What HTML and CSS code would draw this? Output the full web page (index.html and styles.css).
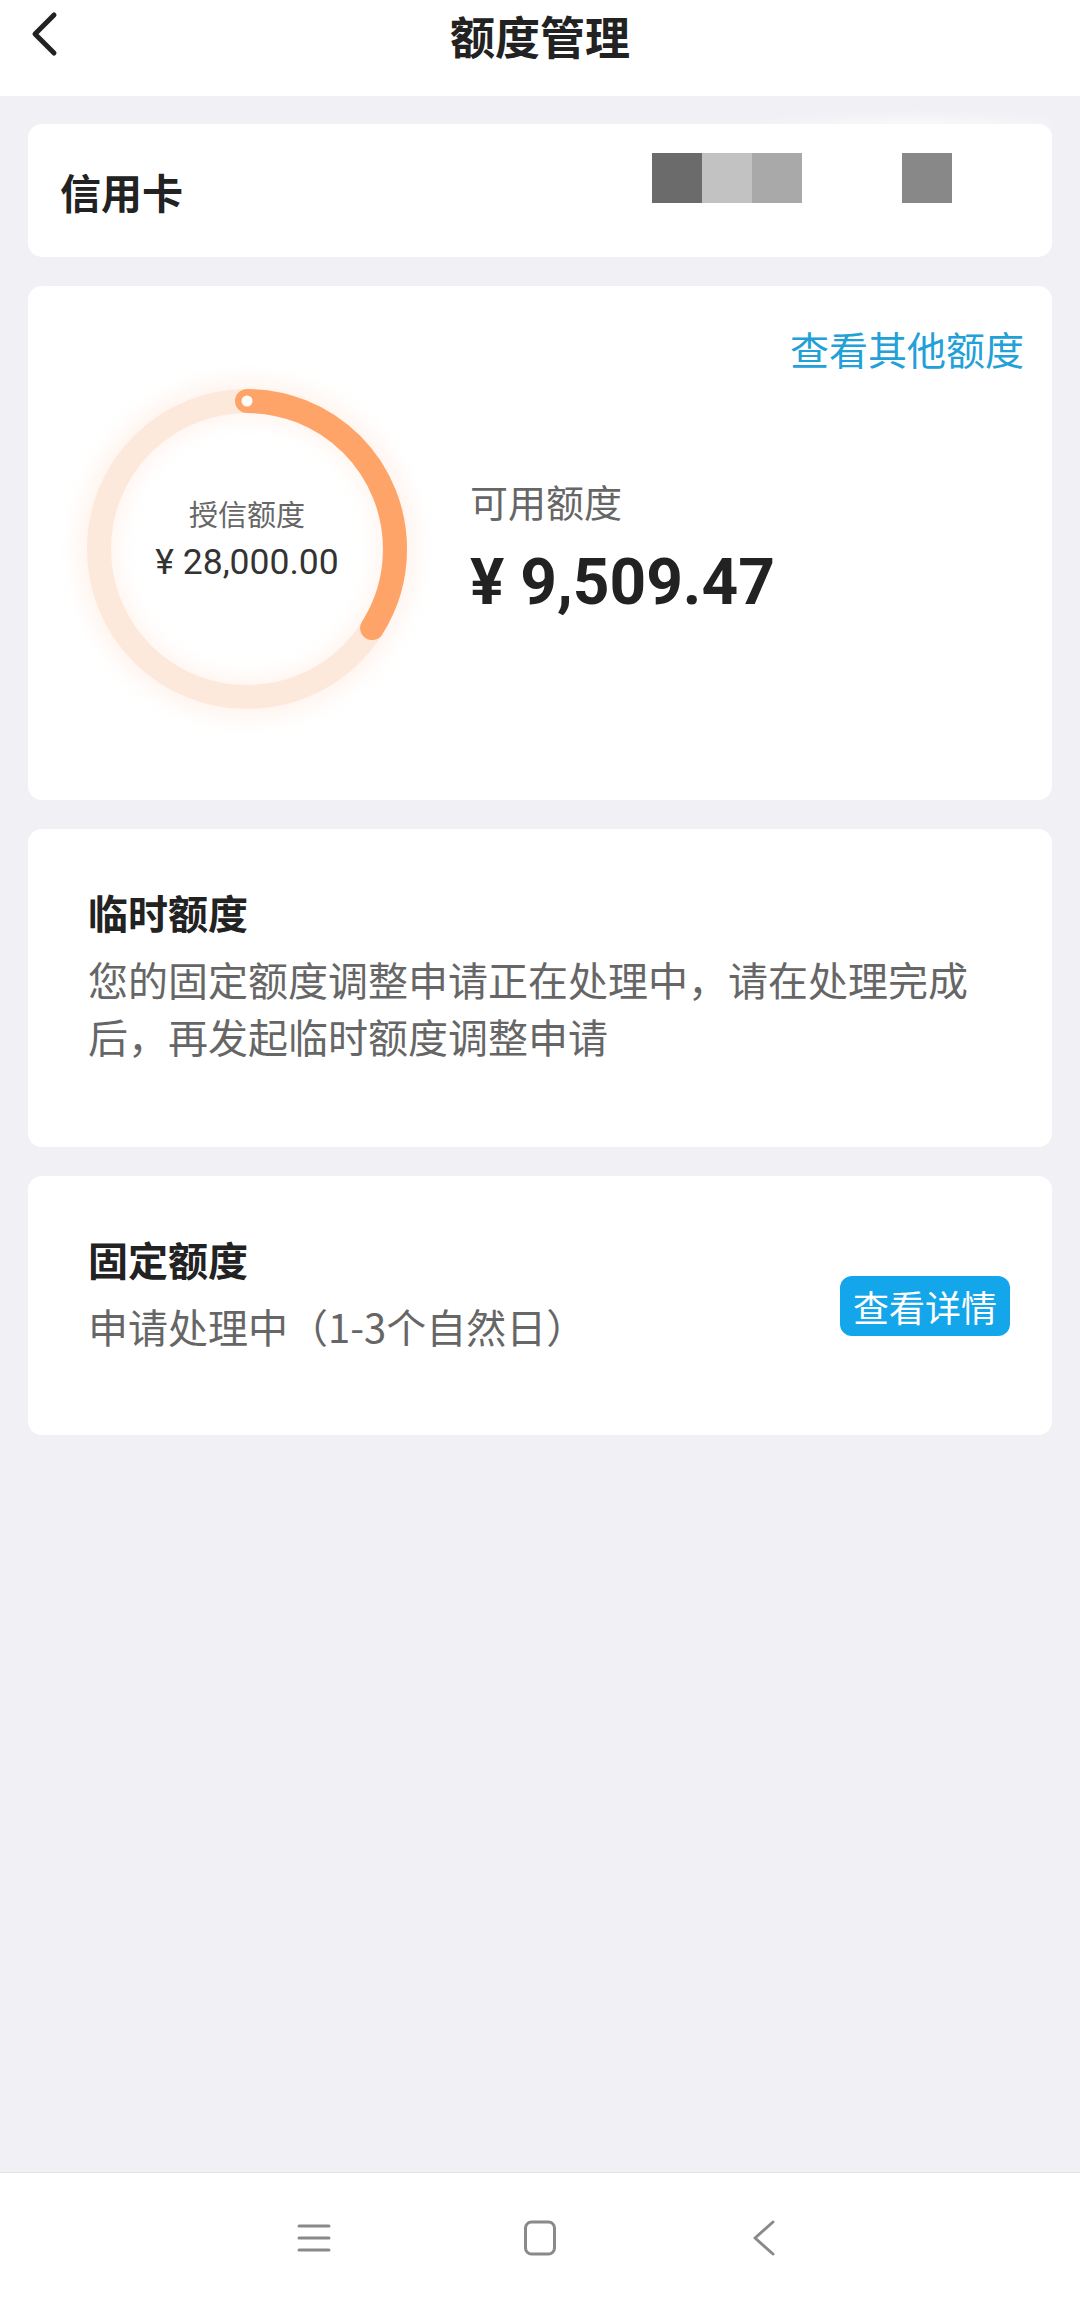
FILE: index.html
```html
<!DOCTYPE html>
<html lang="zh-CN">
<head>
<meta charset="utf-8">
<title>额度管理</title>
<link rel="stylesheet" href="styles.css">
</head>
<body>
<div class="page">
  <header class="topbar">
    <svg class="back" width="70" height="70" viewBox="0 0 70 70" aria-label="返回">
      <polyline points="54,7 35,26 54,45"/>
    </svg>
    <h1 class="title">额度管理</h1>
    <span class="spacer"></span>
  </header>

  <main class="content">
    <section class="card card-account">
      <span class="account-label">信用卡</span>
      <div class="mask">
        <span class="blk blk-a"></span>
        <span class="blk blk-b"></span>
        <span class="blk blk-c"></span>
        <span class="blk blk-d"></span>
      </div>
    </section>

    <section class="card card-quota">
      <div class="quota-head"><a class="link">查看其他额度</a></div>
      <div class="quota-body">
        <div class="ring">
          <svg class="ring-svg" width="354" height="354" viewBox="0 0 354 354">
            <defs>
              <filter id="glow" x="-30%" y="-30%" width="160%" height="160%">
                <feGaussianBlur stdDeviation="10"/>
              </filter>
            </defs>
            <circle cx="177" cy="177" r="150" fill="none" stroke="#ffd7c0" stroke-width="38" filter="url(#glow)" opacity="0.28"/>
            <circle cx="177" cy="177" r="148" fill="none" stroke="#fde8dc" stroke-width="24"/>
            <circle cx="177" cy="177" r="148" fill="none" stroke="#ffa468" stroke-width="24" stroke-linecap="round" stroke-dasharray="315.8 1000" transform="rotate(-90 177 177)"/>
            <circle cx="177" cy="29" r="5.5" fill="#ffffff"/>
          </svg>
          <div class="ring-text">
            <span class="ring-label">授信额度</span>
            <span class="ring-amount">¥ 28,000.00</span>
          </div>
        </div>
        <div class="avail">
          <span class="avail-label">可用额度</span>
          <span class="avail-amount">¥ 9,509.47</span>
        </div>
      </div>
    </section>

    <section class="card card-info">
      <h2 class="info-title">临时额度</h2>
      <p class="info-text">您的固定额度调整申请正在处理中，请在处理完成后，再发起临时额度调整申请</p>
    </section>

    <section class="card card-info card-fixed">
      <div class="info-main">
        <h2 class="info-title">固定额度</h2>
        <p class="info-text">申请处理中（1-3个自然日）</p>
      </div>
      <a class="detail-btn">查看详情</a>
    </section>
  </main>

  <nav class="navbar">
    <span class="nav-item">
      <svg width="40" height="40" viewBox="0 0 40 40"><line x1="5" y1="8" x2="35" y2="8"/><line x1="5" y1="20" x2="35" y2="20"/><line x1="5" y1="32" x2="35" y2="32"/></svg>
    </span>
    <span class="nav-item">
      <svg width="40" height="40" viewBox="0 0 40 40"><rect x="5.5" y="4" width="29" height="32" rx="6"/></svg>
    </span>
    <span class="nav-item">
      <svg width="40" height="40" viewBox="0 0 40 40"><polyline points="27,4 9,20 27,36"/></svg>
    </span>
  </nav>
</div>
</body>
</html>
```

FILE: styles.css
```css
* { box-sizing: border-box; }

html, body {
  margin: 0;
  padding: 0;
}

body {
  background: #f0f0f5;
  font-family: "Noto Sans CJK SC", "Roboto", sans-serif;
  color: #222;
}

.page {
  min-height: 2303px;
  display: flex;
  flex-direction: column;
}

/* Header */
.topbar {
  height: 96px;
  background: #ffffff;
  display: grid;
  grid-template-columns: 1fr auto 1fr;
  align-items: start;
  padding-top: 8px;
}

.back {
  display: block;
  fill: none;
  stroke: #222;
  stroke-width: 5;
  stroke-linecap: round;
  stroke-linejoin: round;
}

.title {
  margin: 0;
  font-size: 45px;
  line-height: 56px;
  font-weight: 700;
  color: #222;
  text-align: center;
}

/* Content */
.content {
  flex: 1;
  padding: 28px 28px 0;
  display: flex;
  flex-direction: column;
  gap: 29px;
}

.card {
  background: #ffffff;
  border-radius: 14px;
  position: relative;
}

/* Account card */
.card-account {
  height: 133px;
  display: flex;
  align-items: center;
  padding: 0 32px;
}

.card-account::before {
  content: "";
  position: absolute;
  right: 0;
  top: -28px;
  width: 340px;
  height: 40px;
  background: radial-gradient(ellipse 60% 70% at 60% 100%, rgba(255,255,255,0.95), rgba(255,255,255,0) 100%);
  pointer-events: none;
}

.account-label {
  font-size: 41px;
  line-height: 56px;
  font-weight: 700;
  color: #222;
}

.mask {
  margin-left: auto;
  margin-right: 68px;
  align-self: flex-start;
  margin-top: 29px;
  display: flex;
}

.blk {
  display: block;
  width: 50px;
  height: 50px;
}
.blk-a { background: #6b6b6b; }
.blk-b { background: #c2c2c2; }
.blk-c { background: #a9a9a9; }
.blk-d { background: #888888; margin-left: 100px; }

/* Quota card */
.card-quota {
  padding: 39px 28px 74px 42px;
}

.quota-head {
  display: flex;
  justify-content: flex-end;
}

.link {
  font-size: 39px;
  line-height: 47px;
  color: #22a0d8;
}

.quota-body {
  display: flex;
  align-items: center;
  gap: 46px;
}

.ring {
  position: relative;
  width: 354px;
  height: 354px;
  flex: none;
}

.ring-svg {
  display: block;
  overflow: visible;
}

.ring-text {
  position: absolute;
  inset: 0;
  display: flex;
  flex-direction: column;
  align-items: center;
  justify-content: center;
  padding-bottom: 22px;
}

.ring-label {
  font-size: 29px;
  line-height: 40px;
  color: #666;
}

.ring-amount {
  margin-top: 7px;
  font-family: "Roboto", "Noto Sans CJK SC", sans-serif;
  font-size: 35.5px;
  line-height: 44px;
  color: #333;
}

.avail {
  display: flex;
  flex-direction: column;
}

.avail-label {
  font-size: 38px;
  line-height: 50px;
  color: #666;
}

.avail-amount {
  margin-top: 17px;
  font-family: "Roboto", "Noto Sans CJK SC", sans-serif;
  font-size: 64px;
  line-height: 80px;
  font-weight: 700;
  color: #222;
}

/* Info cards */
.card-info {
  padding: 55px 60px 82px;
}

.info-title {
  margin: 0;
  font-size: 40px;
  line-height: 56px;
  font-weight: 700;
  color: #222;
}

.info-text {
  margin: 11px 0 0;
  font-size: 40px;
  line-height: 57px;
  color: #666;
}

.card-fixed {
  display: flex;
  align-items: center;
  padding-right: 42px;
  padding-bottom: 80px;
}

.info-main {
  flex: 1;
}

.detail-btn {
  margin-top: 25px;
  height: 60px;
  padding: 0 13px;
  border-radius: 12px;
  background: #14a6ea;
  color: #ffffff;
  font-size: 36px;
  line-height: 60px;
}

/* Bottom navigation */
.navbar {
  height: 131px;
  background: #ffffff;
  border-top: 1px solid #e2e2e6;
  display: grid;
  grid-template-columns: repeat(3, 226px);
  justify-content: center;
  align-items: center;
  justify-items: center;
}

.nav-item svg {
  display: block;
  fill: none;
  stroke: #8a8a8a;
  stroke-width: 3;
  stroke-linecap: round;
  stroke-linejoin: round;
}
```
